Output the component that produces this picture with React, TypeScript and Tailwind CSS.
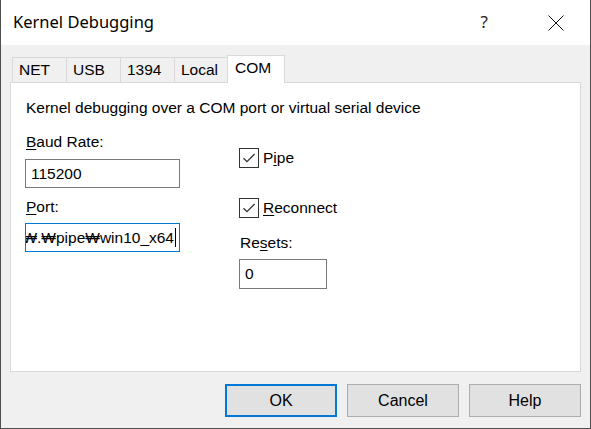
import React from "react"

const tabs = ["NET", "USB", "1394", "Local"]

function CheckBox({ children }: { children: React.ReactNode }) {
  return (
    <div className="flex items-center h-[21px]">
      <div className="w-[20px] h-[20px] border border-[#333333] bg-white flex items-center justify-center">
        <svg width="14" height="14" viewBox="0 0 14 14">
          <path d="M1.5 7.2 L5 10.6 L12.6 3" fill="none" stroke="#333333" strokeWidth="1.3" />
        </svg>
      </div>
      <span className="ml-[4px] leading-[17px]">{children}</span>
    </div>
  )
}

function Button({ label, primary }: { label: string; primary?: boolean }) {
  return (
    <button
      className={`w-[112px] h-[33px] bg-[#e1e1e1] text-[16px] text-black ${
        primary ? "border-2 border-[#0078d7]" : "border border-[#adadad]"
      }`}
    >
      {label}
    </button>
  )
}

export default function App() {
  return (
    <div
      className="w-[591px] h-[429px] bg-[#f0f0f0] border-x border-b border-[#4f4f4f] flex flex-col text-[15.5px] text-black"
      style={{ fontFamily: '"Liberation Sans", Arial, sans-serif' }}
    >
      {/* title bar */}
      <div className="h-[45px] bg-white flex items-center shrink-0">
        <span
          className="ml-[12px] text-[16.5px] text-black"
          style={{ fontFamily: '"Noto Sans", "Open Sans", sans-serif' }}
        >
          Kernel Debugging
        </span>
        <span
          className="ml-auto text-[17px] text-[#222] mr-[60px] -mt-[1px]"
          style={{ fontFamily: '"Noto Sans", sans-serif' }}
        >
          ?
        </span>
        <svg width="16" height="16" viewBox="0 0 16 16" className="mr-[26px]">
          <path d="M0.5 0.5 L15.5 15.5 M15.5 0.5 L0.5 15.5" stroke="#111" strokeWidth="1" />
        </svg>
      </div>

      <div className="px-[9px] pt-[10px] flex flex-col">
        {/* tabs */}
        <div className="flex items-end h-[27px] pl-[2px]">
          {tabs.map((t, i) => (
            <div
              key={t}
              className={`h-[25px] border-t border-l border-[#d9d9d9] pl-[6px] leading-[24px] w-[54px] ${
                i === 3 ? "border-r w-[55px]" : ""
              }`}
            >
              {t}
            </div>
          ))}
          <div className="relative z-10 -ml-[2px] -mb-[1px] h-[28px] w-[58px] bg-white border-t border-x border-[#d9d9d9] pl-[7px] leading-[24px]">
            COM
          </div>
        </div>

        {/* panel */}
        <div className="h-[290px] bg-white border border-[#d9d9d9] pl-[15px] pt-[16px]">
          <div className="leading-[17px]">Kernel debugging over a COM port or virtual serial device</div>
          <div className="flex mt-[17px] -ml-[1px]">
            <div className="w-[155px] flex flex-col">
              <div className="leading-[17px] pl-[1px]">
                <span className="underline underline-offset-[2px]">B</span>aud Rate:
              </div>
              <div className="mt-[9px] h-[29px] border border-[#7a7a7a] pl-[5px] leading-[27px]">115200</div>
              <div className="mt-[10px] leading-[17px] pl-[1px]">
                <span className="underline underline-offset-[2px]">P</span>ort:
              </div>
              <div className="mt-[8px] h-[29px] border border-[#0078d7] overflow-hidden flex justify-end items-center pr-[3px] whitespace-nowrap">
                <span className="leading-[27px] shrink-0">₩₩.₩pipe₩win10_x64</span>
                <span className="w-[1px] h-[19px] bg-black ml-[1px] shrink-0" />
              </div>
            </div>
            <div className="ml-[59px] flex flex-col">
              <div className="mt-[14px]">
                <CheckBox>
                  P<span className="underline underline-offset-[2px]">i</span>pe
                </CheckBox>
              </div>
              <div className="mt-[29px]">
                <CheckBox>
                  <span className="underline underline-offset-[2px]">R</span>econnect
                </CheckBox>
              </div>
              <div className="mt-[16px] leading-[17px] pl-[1px]">
                Re<span className="underline underline-offset-[2px]">s</span>ets:
              </div>
              <div className="mt-[8px] w-[88px] h-[30px] border border-[#7a7a7a] pl-[5px] leading-[28px]">0</div>
            </div>
          </div>
        </div>

        {/* buttons */}
        <div className="flex justify-end gap-[10px] mt-[12px]">
          <Button label="OK" primary />
          <Button label="Cancel" />
          <Button label="Help" />
        </div>
      </div>
    </div>
  )
}
